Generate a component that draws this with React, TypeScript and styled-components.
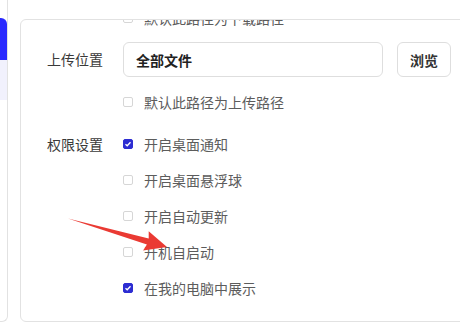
import styled, { createGlobalStyle } from "styled-components";

const GlobalStyle = createGlobalStyle`
  html, body {
    margin: 0;
    padding: 0;
    background: #fff;
    font-family: "Noto Sans CJK SC", "Noto Sans", sans-serif;
    overflow: hidden;
  }
`;

const Page = styled.div`
  position: relative;
  display: flex;
  align-items: flex-start;
  gap: 12px;
  width: 460px;
  height: 327px;
  overflow: hidden;
`;

const Sidebar = styled.div`
  flex: none;
  display: flex;
  flex-direction: column;
  width: 8px;
  height: 322px;
  padding-top: 18px;
  box-sizing: border-box;
  border-right: 1px solid #e2e2e2;
  border-bottom: 1px solid #e2e2e2;
  border-bottom-right-radius: 6px;
`;

const MenuItem = styled.div<{ $active?: boolean }>`
  height: ${(p) => (p.$active ? 42 : 40)}px;
  background: ${(p) => (p.$active ? "#2a2afe" : "#f1f1fd")};
  border-top-right-radius: ${(p) => (p.$active ? 6 : 0)}px;
`;

const Card = styled.div`
  flex: none;
  margin-top: 19px;
  width: 460px;
  height: 303px;
  box-sizing: border-box;
  border: 1px solid #e2e2e2;
  border-radius: 6px;
  padding: 0 26px;
  overflow: hidden;
`;

/* content is scrolled a little inside the card */
const Content = styled.div`
  margin-top: -20px;
  display: flex;
  flex-direction: column;
`;

const FormRow = styled.div<{ $gap?: number }>`
  display: flex;
  align-items: flex-start;
  margin-top: ${(p) => p.$gap ?? 0}px;
`;

const Label = styled.div<{ $h?: number }>`
  width: 76px;
  flex: none;
  height: ${(p) => p.$h ?? 36}px;
  line-height: ${(p) => p.$h ?? 36}px;
  font-size: 14px;
  color: #3a3a3a;
`;

const Controls = styled.div`
  display: flex;
  flex-direction: column;
`;

const InputLine = styled.div`
  display: flex;
  align-items: center;
  gap: 14px;
`;

const PathInput = styled.div`
  width: 260px;
  height: 35px;
  box-sizing: border-box;
  border: 1px solid #dedede;
  border-radius: 6px;
  padding: 0 12px;
  display: flex;
  align-items: center;
  font-size: 14px;
  font-weight: 700;
  color: #222;
`;

const BrowseButton = styled.button`
  width: 54px;
  height: 35px;
  box-sizing: border-box;
  border: 1px solid #dedede;
  border-radius: 6px;
  background: #fff;
  font-family: inherit;
  font-size: 14px;
  font-weight: 600;
  color: #333;
  padding: 0;
`;

const CheckRow = styled.label`
  display: flex;
  align-items: center;
  gap: 11px;
  height: 36px;
  font-size: 14px;
  color: #5c5c5c;
`;

const Box = styled.span<{ $checked?: boolean }>`
  flex: none;
  width: 10px;
  height: 10px;
  box-sizing: border-box;
  border-radius: 2px;
  border: 1px solid ${(p) => (p.$checked ? "#2d2dd2" : "#d6d6d6")};
  background: ${(p) => (p.$checked ? "#2d2dd2" : "#fff")};
  display: flex;
  align-items: center;
  justify-content: center;
`;

const Arrow = styled.svg`
  position: absolute;
  left: 0;
  top: 0;
  pointer-events: none;
`;

function Check(props: { checked?: boolean; text: string }) {
  return (
    <CheckRow>
      <Box $checked={props.checked}>
        {props.checked && (
          <svg width="8" height="8" viewBox="0 0 8 8">
            <path d="M1.5 4.2 L3.2 5.8 L6.5 2.2" fill="none" stroke="#fff" strokeWidth="1.3" />
          </svg>
        )}
      </Box>
      {props.text}
    </CheckRow>
  );
}

const permissions = [
  { text: "开启桌面通知", checked: true },
  { text: "开启桌面悬浮球", checked: false },
  { text: "开启自动更新", checked: false },
  { text: "开机自启动", checked: false },
  { text: "在我的电脑中展示", checked: true },
];

export default function App() {
  return (
    <Page>
      <GlobalStyle />
      <Sidebar>
        <MenuItem $active />
        <MenuItem />
      </Sidebar>
      <Card>
        <Content>
          <FormRow>
            <Label />
            <Check text="默认此路径为下载路径" />
          </FormRow>
          <FormRow $gap={6}>
            <Label $h={35}>上传位置</Label>
            <InputLine>
              <PathInput>全部文件</PathInput>
              <BrowseButton>浏览</BrowseButton>
            </InputLine>
          </FormRow>
          <FormRow $gap={7}>
            <Label />
            <Check text="默认此路径为上传路径" />
          </FormRow>
          <FormRow $gap={6}>
            <Label>权限设置</Label>
            <Controls>
              {permissions.map((p) => (
                <Check key={p.text} text={p.text} checked={p.checked} />
              ))}
            </Controls>
          </FormRow>
        </Content>
      </Card>
      <Arrow width="460" height="327" viewBox="0 0 460 327">
        <polygon
          points="68,218.5 148.7,238.4 148.7,231.3 167,247 143.1,250.5 146.9,244.6"
          fill="#ea3a33"
        />
      </Arrow>
    </Page>
  );
}
